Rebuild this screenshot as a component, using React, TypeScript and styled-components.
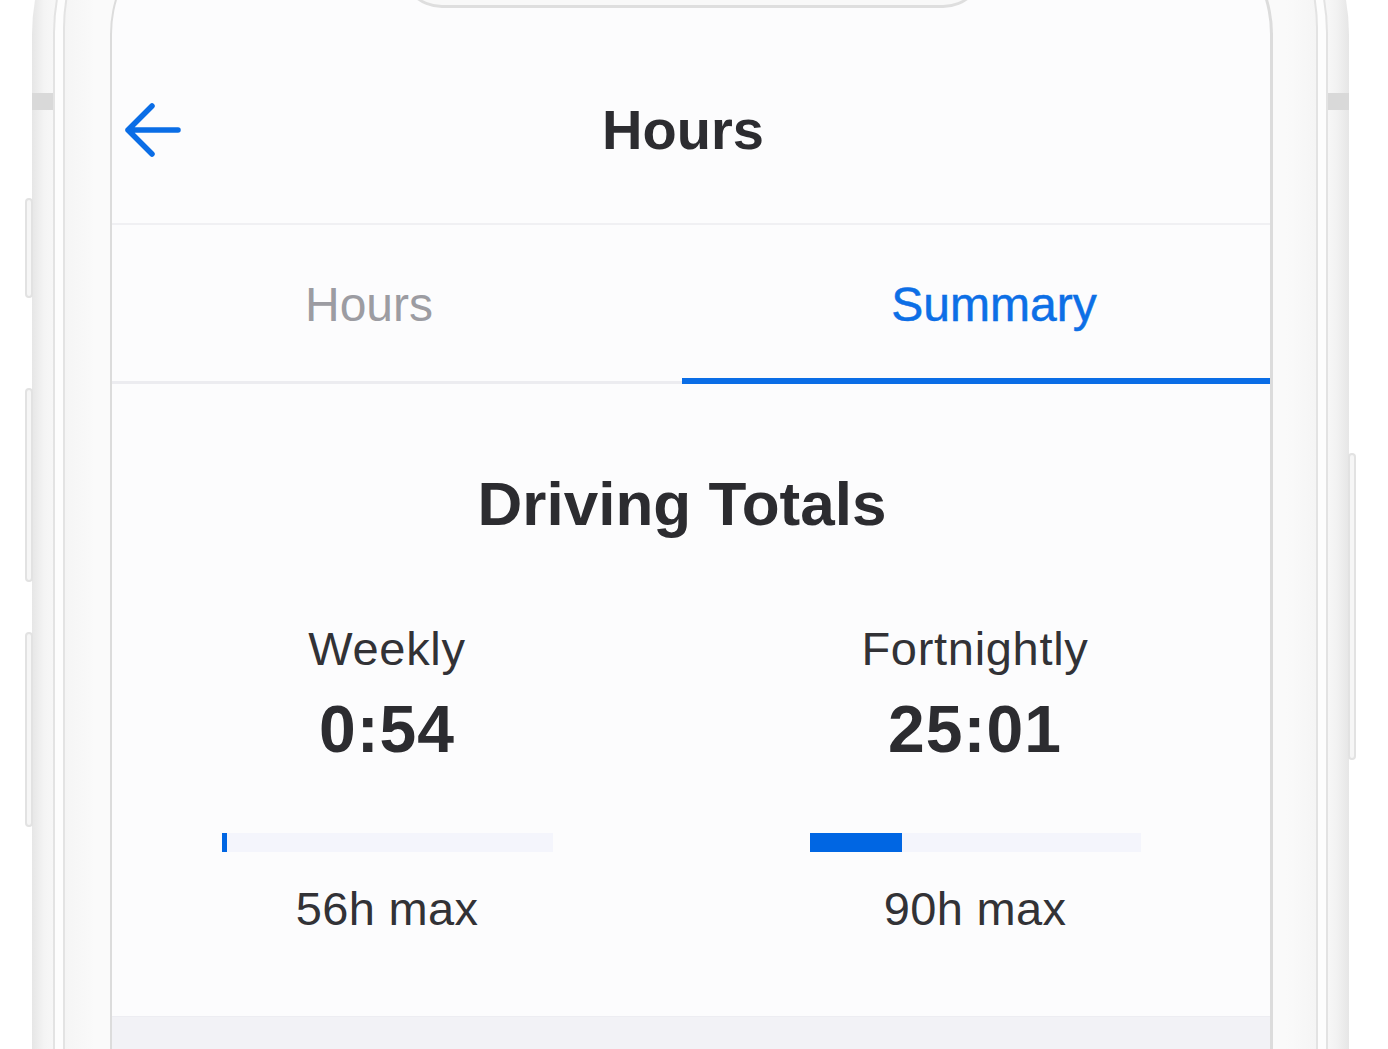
import React from "react";
import styled, { createGlobalStyle } from "styled-components";

const GlobalStyle = createGlobalStyle`
  html, body { margin: 0; padding: 0; background: #ffffff; }
  body { font-family: "Liberation Sans", Arial, sans-serif; }
`;

const Page = styled.div`
  height: 1049px;
  overflow: hidden;
  padding-left: 32px;
  box-sizing: border-box;
  background: #ffffff;
`;

const Shell = styled.div`
  position: relative;
  width: 1317px;
  margin-top: -170px;
  height: 1300px;
  box-sizing: border-box;
  padding: 8px 21px 0 21px;
  border-radius: 205px 205px 0 0;
  background:
    linear-gradient(#d9d9d9, #d9d9d9) 0 263px / 100% 17px no-repeat,
    linear-gradient(to right, #e6e6e6 0, #f4f4f4 12px, #f7f7f7 21px, #f7f7f7 calc(100% - 21px), #f2f2f2 calc(100% - 12px), #e6e6e6 100%);
`;

const SideButton = styled.div<{ $side: "left" | "right"; $top: number; $h: number }>`
  position: absolute;
  ${(p) => (p.$side === "left" ? "left: -7px;" : "right: -7px;")}
  top: ${(p) => p.$top}px;
  height: ${(p) => p.$h}px;
  width: 8px;
  box-sizing: border-box;
  border: 2px solid #e2e2e2;
  border-radius: 4px;
  background: #f6f6f6;
`;

const Band = styled.div`
  height: 100%;
  box-sizing: border-box;
  padding: 8px 8px 0 8px;
  border: 2px solid #e3e3e3;
  border-bottom: none;
  border-radius: 195px 195px 0 0;
  background: #fdfdfd;
`;

const Bezel = styled.div`
  height: 100%;
  box-sizing: border-box;
  padding: 63px 43px 0 45px;
  border: 2px solid #e3e3e3;
  border-bottom: none;
  border-radius: 180px 180px 0 0;
  background: linear-gradient(to right, #f5f5f5, #fafafa 30px, #fafafa calc(100% - 30px), #f5f5f5);
`;

const Screen = styled.div`
  position: relative;
  height: 100%;
  box-sizing: border-box;
  border: 2px solid #dcdcdc;
  border-right-width: 3px;
  border-bottom: none;
  border-radius: 121px 121px 0 0;
  background: #fcfcfd;
  overflow: hidden;
  display: flex;
  flex-direction: column;
`;

const Notch = styled.div`
  position: absolute;
  top: -4px;
  left: 50%;
  margin-left: -291px;
  width: 585px;
  height: 97px;
  box-sizing: border-box;
  border: 2px solid #dedede;
  border-top: none;
  border-bottom-width: 3px;
  border-radius: 0 0 42px 42px;
  background: #f8f8f8;
`;

const Header = styled.div`
  display: grid;
  grid-template-columns: 1fr auto 1fr;
  align-items: center;
  height: 186px;
  margin-top: 122px;
  padding: 0 28px 0 12px;
  border-bottom: 2px solid #f0f0f3;
`;

const BackButton = styled.div`
  display: flex;
  align-items: center;
  justify-self: start;
  color: #0a6de6;
`;

const Title = styled.h1`
  margin: 0;
  font-family: "Liberation Sans", Arial, sans-serif;
  font-weight: 700;
  font-size: 56px;
  line-height: 1;
  color: #2c2c30;
`;

const Tabs = styled.div`
  display: grid;
  grid-template-columns: 570px 1fr;
`;

const Tab = styled.div<{ $active?: boolean; $shift: number }>`
  height: 159px;
  box-sizing: border-box;
  display: flex;
  justify-content: center;
  align-items: flex-start;
  padding-top: 56px;
  ${(p) => (p.$shift < 0 ? `padding-right: ${-p.$shift}px;` : `padding-left: ${p.$shift}px;`)}
  border-bottom: ${(p) => (p.$active ? "6px solid #0a6de6" : "3px solid #ececf0")};
  font-size: 48px;
  line-height: 1;
  font-weight: 400;
  color: ${(p) => (p.$active ? "#0d6fe6" : "#9c9ca2")};
  ${(p) => (p.$active ? "-webkit-text-stroke: 0.5px #0d6fe6;" : "")}
`;

const Content = styled.div`
  display: flex;
  flex-direction: column;
  align-items: stretch;
  padding: 89px 0 84px;
  background: #fcfcfd;
`;

const SectionTitle = styled.h2`
  margin: 0;
  text-align: center;
  padding-right: 18px;
  font-family: "Liberation Sans", Arial, sans-serif;
  font-weight: 700;
  font-size: 62px;
  line-height: 1;
  color: #2c2c30;
`;

const Stats = styled.div`
  display: grid;
  grid-template-columns: 500px 500px;
  column-gap: 88px;
  padding-left: 25px;
  margin-top: 90px;
`;

const Stat = styled.div`
  display: flex;
  flex-direction: column;
  align-items: center;
`;

const StatLabel = styled.div`
  font-size: 47px;
  line-height: 1;
  letter-spacing: 0.7px;
  color: #323236;
`;

const StatValue = styled.div`
  margin-top: 24px;
  font-size: 66px;
  font-weight: 700;
  line-height: 1;
  letter-spacing: 1px;
  color: #2c2c30;
`;

const Track = styled.div`
  margin-top: 71px;
  width: 331px;
  height: 19px;
  background: #f4f5fc;
  display: flex;
`;

const Fill = styled.div`
  height: 100%;
  background: #0066e3;
`;

const MaxLabel = styled.div`
  margin-top: 33px;
  font-size: 47px;
  line-height: 1;
  letter-spacing: 0.3px;
  color: #323236;
`;

const Footer = styled.div`
  flex: 1;
  background: #f2f2f6;
  border-top: 1px solid #ededf2;
`;

const BackArrow = () => (
  <svg width="58" height="56" viewBox="0 0 58 56" fill="none">
    <path
      d="M4 28 H54 M28 4 L4 28 L28 52"
      stroke="currentColor"
      strokeWidth="5.5"
      strokeLinecap="round"
      strokeLinejoin="round"
    />
  </svg>
);

type StatData = { label: string; value: string; pct: number; max: string };

const stats: StatData[] = [
  { label: "Weekly", value: "0:54", pct: (54 / 60 / 56) * 100, max: "56h max" },
  { label: "Fortnightly", value: "25:01", pct: ((25 + 1 / 60) / 90) * 100, max: "90h max" },
];

export default function App() {
  return (
    <>
      <GlobalStyle />
      <Page>
        <Shell>
          <SideButton $side="left" $top={368} $h={100} />
          <SideButton $side="left" $top={558} $h={194} />
          <SideButton $side="left" $top={802} $h={195} />
          <SideButton $side="right" $top={623} $h={307} />
          <Band>
            <Bezel>
              <Screen>
                <Notch />
                <Header>
                  <BackButton>
                    <BackArrow />
                  </BackButton>
                  <Title>Hours</Title>
                  <div />
                </Header>
                <Tabs>
                  <Tab $shift={-56}>Hours</Tab>
                  <Tab $active $shift={36}>Summary</Tab>
                </Tabs>
                <Content>
                  <SectionTitle>Driving Totals</SectionTitle>
                  <Stats>
                    {stats.map((s) => (
                      <Stat key={s.label}>
                        <StatLabel>{s.label}</StatLabel>
                        <StatValue>{s.value}</StatValue>
                        <Track>
                          <Fill style={{ width: `${Math.max(s.pct, 1.5)}%` }} />
                        </Track>
                        <MaxLabel>{s.max}</MaxLabel>
                      </Stat>
                    ))}
                  </Stats>
                </Content>
                <Footer />
              </Screen>
            </Bezel>
          </Band>
        </Shell>
      </Page>
    </>
  );
}
